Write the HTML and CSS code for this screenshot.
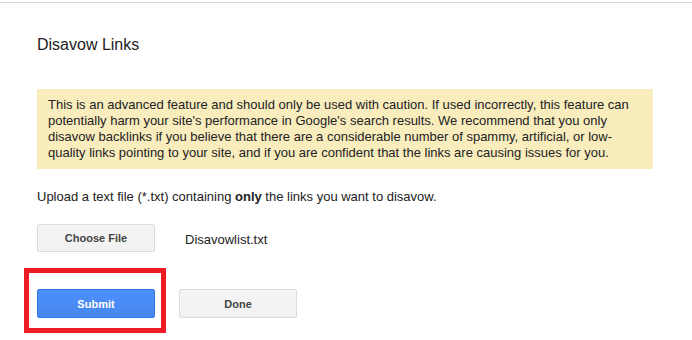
FILE: index.html
```html
<!DOCTYPE html>
<html lang="en">

<head>
    <meta charset="UTF-8">
    <meta name="viewport" content="width=device-width, initial-scale=1.0">
    <title>Disavow Links</title>
    <link rel="stylesheet" href="styles.css">
</head>

<body>
    <div class="page">
        <h1>Disavow Links</h1>

        <!-- Warning -->
        <div class="warning">
            This is an advanced feature and should only be used with caution. If used incorrectly, this feature can
            potentially harm your site's performance in Google's search results. We recommend that you only
            disavow backlinks if you believe that there are a considerable number of spammy, artificial, or low-quality
            links pointing to your site, and if you are confident that the links are causing issues for you.
        </div>

        <p class="upload-hint">Upload a text file (*.txt) containing <b>only</b> the links you want to disavow.</p>

        <!-- File picker -->
        <div class="file-row">
            <button class="btn">Choose File</button>
            <span class="file-name">Disavowlist.txt</span>
        </div>

        <!-- Actions -->
        <div class="action-row">
            <button class="btn btn-primary">Submit</button>
            <button class="btn">Done</button>
            <div class="highlight"></div>
        </div>
    </div>
</body>

</html>
```

FILE: styles.css
```css
/* Base styles */
body {
    margin: 0;
    min-height: 340px;
    font-family: "Liberation Sans", Arial, sans-serif;
    color: #222;
    background: #fff;
}

.page {
    margin-top: 2px;
    border-top: 1px solid #d6d6d6;
    padding: 0 39px 30px 37px;
}

h1 {
    margin: 32px 0 0;
    font-size: 16px;
    font-weight: normal;
    line-height: 20px;
    color: #222;
}

/* Warning box */
.warning {
    margin-top: 34px;
    padding: 8px 11px;
    background-color: #f9edbe;
    font-size: 13px;
    line-height: 16px;
    color: #222;
}

.upload-hint {
    margin: 20px 0 0;
    font-size: 13px;
    line-height: 16px;
    color: #222;
}

/* Buttons */
.btn {
    box-sizing: border-box;
    width: 118px;
    height: 28px;
    padding: 0;
    border: 1px solid #dcdcdc;
    border-radius: 2px;
    background: linear-gradient(#f5f5f5, #f1f1f1);
    font-family: "Liberation Sans", Arial, sans-serif;
    font-size: 11px;
    font-weight: bold;
    color: #444;
}

.btn-primary {
    border-color: #3079ed;
    background: linear-gradient(#4d90fe, #4787ed);
    color: #fff;
}

.file-row {
    display: flex;
    align-items: center;
    gap: 30px;
    margin-top: 19px;
}

.file-name {
    padding-top: 3px;
    font-size: 13px;
    color: #222;
}

.action-row {
    position: relative;
    display: flex;
    gap: 24px;
    margin-top: 37px;
}

.action-row .btn {
    height: 29px;
}

/* Red annotation box */
.highlight {
    position: absolute;
    left: -13px;
    top: -21px;
    width: 132px;
    height: 55px;
    border: 5px solid #ed1c24;
}
```
